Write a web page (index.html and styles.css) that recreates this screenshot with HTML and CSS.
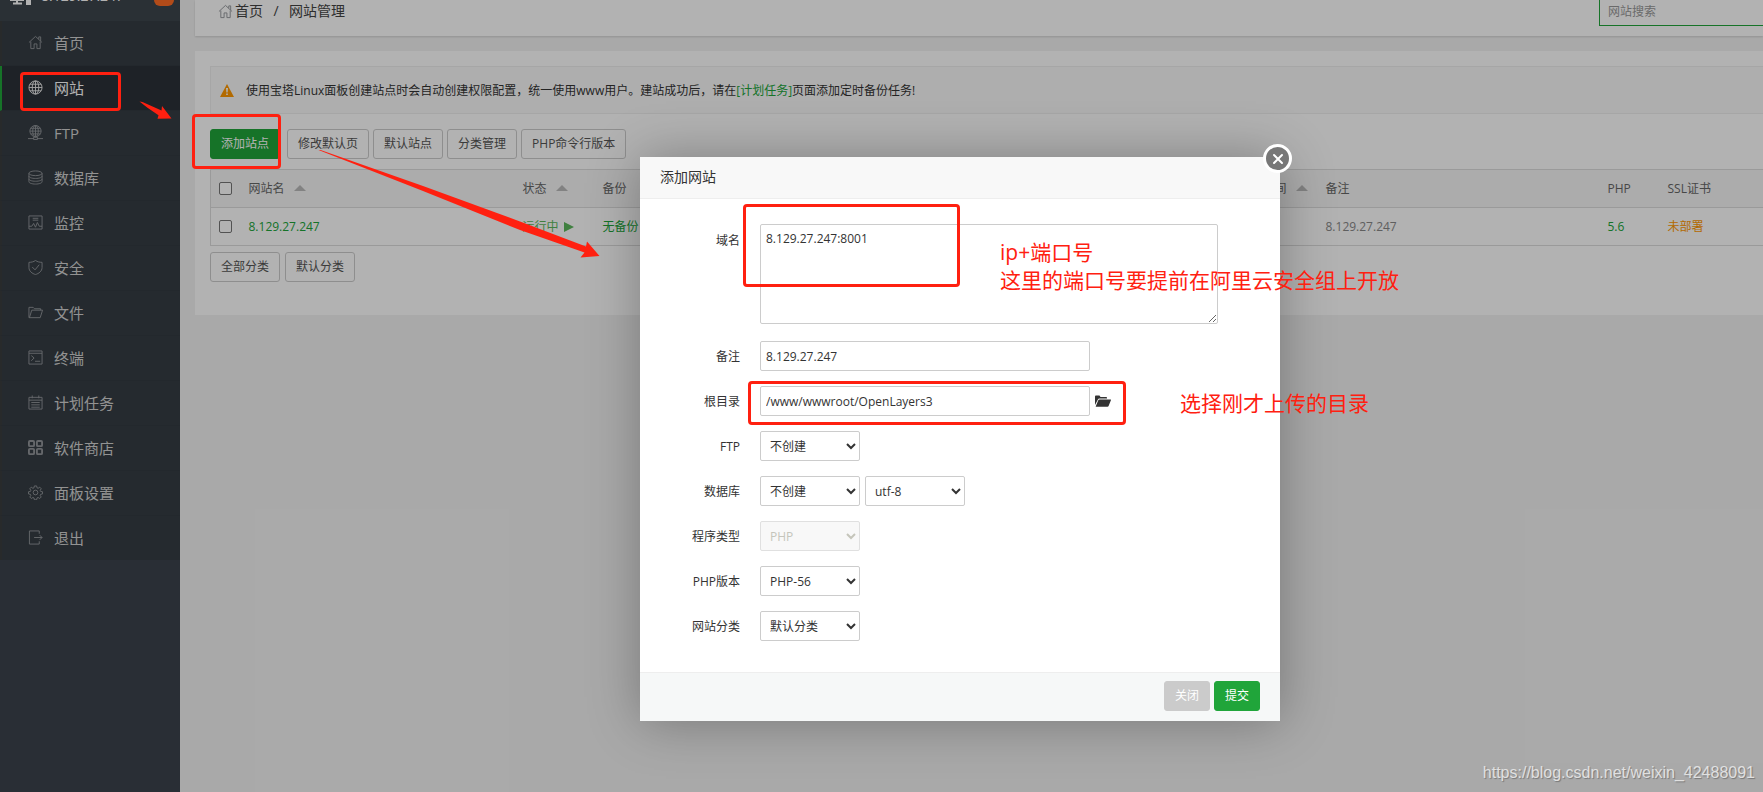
FILE: index.html
```html
<!DOCTYPE html>
<html lang="zh-CN">
<head>
<meta charset="utf-8">
<title>网站管理</title>
<link rel="stylesheet" href="styles.css">
</head>
<body>
<div class="app">
  <aside class="sidebar">
    <div class="brand">
      <div class="brand-row">
        <svg class="brand-icon" width="22" height="22" viewBox="0 0 22 22" fill="none" stroke="currentColor" stroke-width="2"><path d="M1 3h12v12H1zM7 15v3M3 18.500h9"/><path d="M16 7h5v13h-5z" fill="currentColor" stroke="none"/></svg>
        <span class="brand-name">8.129.27.247</span>
        <span class="badge">0</span>
      </div>
    </div>
    <nav class="menu">
      <a class="menu-item" href="#"><svg class="icon" viewBox="0 0 16 16"><path d="M1 8l7-6.500L15 8M11.500 4.500V2h2v4.500M3 7v7.500h3.500V9.500h3v5H13V7"/></svg>首页</a>
      <a class="menu-item active" href="#"><svg class="icon" viewBox="0 0 16 16"><circle cx="8" cy="8" r="7"/><ellipse cx="8" cy="8" rx="3.500" ry="7"/><path d="M8 1v14M1 8h14M2 4.500h12M2 11.500h12"/></svg>网站</a>
      <a class="menu-item" href="#"><svg class="icon" viewBox="0 0 16 16"><circle cx="8" cy="6.500" r="6"/><ellipse cx="8" cy="6.500" rx="3" ry="6"/><path d="M8 .5v12M2 6.500h12M3 3.500h10M3 9.500h10M0 14.500h6M10 14.500h6M6 13h4v2.500H6z"/></svg>FTP</a>
      <a class="menu-item" href="#"><svg class="icon" viewBox="0 0 16 16"><ellipse cx="8" cy="3.500" rx="7" ry="2.500"/><path d="M1 3.500v9c0 1.400 3 2.500 7 2.500s7-1.100 7-2.500v-9M1 6.500C1 8 4 9 8 9s7-1 7-2.500M1 9.500C1 11 4 12 8 12s7-1 7-2.500"/></svg>数据库</a>
      <a class="menu-item" href="#"><svg class="icon" viewBox="0 0 16 16"><path d="M1 1h14v14H1zM5 3.500h6M5 5.500h6M1 12h3l2-3 2 4 2-5 2 4h3"/></svg>监控</a>
      <a class="menu-item" href="#"><svg class="icon" viewBox="0 0 16 16"><path d="M8 .5C6 2 3.500 2.500 1 2.500V8c0 4 3.500 6.500 7 7.500 3.500-1 7-3.500 7-7.500V2.500C12.500 2.500 10 2 8 .5zM4.500 7.500l3 3 4.500-5.500"/></svg>安全</a>
      <a class="menu-item" href="#"><svg class="icon" viewBox="0 0 16 16"><path d="M1 13.500V2.500h4.500L7 4h6.500v1.500M1 13.500h12L15.500 5.500H4L1.500 13.500"/></svg>文件</a>
      <a class="menu-item" href="#"><svg class="icon" viewBox="0 0 16 16"><path d="M1 1h14v14H1zM1 3.500h14M3.500 6l3 2.500-3 3M7.500 12H13"/></svg>终端</a>
      <a class="menu-item" href="#"><svg class="icon" viewBox="0 0 16 16"><path d="M1 2.500h14V15H1zM1 5.500h14M4.500 .5v3M11.500 .5v3M3.500 8h9M3.500 10.500h9M3.500 13h9"/></svg>计划任务</a>
      <a class="menu-item" href="#"><svg class="icon bold" viewBox="0 0 16 16"><rect x="1" y="1" width="5.500" height="5.500" rx="1"/><rect x="9.500" y="1" width="5.500" height="5.500" rx="1"/><rect x="1" y="9.500" width="5.500" height="5.500" rx="1"/><rect x="9.500" y="9.500" width="5.500" height="5.500" rx="1"/></svg>软件商店</a>
      <a class="menu-item" href="#"><svg class="icon" viewBox="0 0 16 16"><circle cx="8" cy="8" r="2.500"/><path d="M6.800 1h2.400l.4 2 1.200.5 1.700-1.200 1.600 1.700-1.100 1.700.5 1.200 2 .3v2.300l-2 .4-.5 1.200 1.100 1.700-1.600 1.600-1.700-1.100-1.200.5-.4 2H6.800l-.4-2-1.200-.5-1.700 1.100-1.600-1.600L3 11.100l-.5-1.200-2-.4V7.200l2-.3L3 5.700 1.900 4l1.600-1.700 1.700 1.200L6.400 3z"/></svg>面板设置</a>
      <a class="menu-item" href="#"><svg class="icon" viewBox="0 0 16 16"><path d="M12 4V1H1.500v14H12v-3M6.500 8H15M12.500 5.500L15 8l-2.500 2.500"/></svg>退出</a>
    </nav>
  </aside>

  <main class="main">
    <div class="topbar">
      <div class="topbar-row">
        <div class="crumbs">
          <svg class="icon crumb-icon" viewBox="0 0 16 16"><path d="M1 8l7-6.500L15 8M11.500 4.500V2h2v4.500M3 7v7.500h3.500V9.500h3v5H13V7"/></svg>
          <a href="#">首页</a><span class="slash">/</span><span>网站管理</span>
        </div>
        <input class="search" type="text" placeholder="网站搜索" aria-label="网站搜索">
      </div>
    </div>

    <section class="card">
      <div class="alert">
        <svg width="14" height="13" viewBox="0 0 14 13"><path d="M7 0l7 13H0z" fill="#ff9900"/><path d="M6 4h2l-.4 4.500H6.400zM6.200 9.500h1.600V11H6.200z" fill="#fff"/></svg>
        <p>使用宝塔Linux面板创建站点时会自动创建权限配置，统一使用www用户。建站成功后，请在<a href="#">[计划任务]</a>页面添加定时备份任务!</p>
      </div>
      <div class="toolbar">
        <button class="btn primary" type="button">添加站点</button>
        <button class="btn" type="button">修改默认页</button>
        <button class="btn" type="button">默认站点</button>
        <button class="btn" type="button">分类管理</button>
        <button class="btn" type="button">PHP命令行版本</button>
      </div>
      <table class="sites">
        <colgroup><col class="c-check"><col class="c-name"><col class="c-status"><col class="c-backup"><col class="c-expire"><col class="c-note"><col class="c-php"><col class="c-ssl"></colgroup>
        <thead>
          <tr><th><input type="checkbox" aria-label="全选"></th><th>网站名<i class="sort"></i></th><th>状态<i class="sort"></i></th><th>备份</th><th>到期时间<i class="sort"></i></th><th>备注</th><th>PHP</th><th>SSL证书</th></tr>
        </thead>
        <tbody>
          <tr><td><input type="checkbox" aria-label="8.129.27.247"></td><td><a href="#">8.129.27.247</a></td><td><a class="running" href="#">运行中<i class="play"></i></a></td><td><a href="#">无备份</a></td><td></td><td class="note">8.129.27.247</td><td><a href="#">5.6</a></td><td><a class="warn" href="#">未部署</a></td></tr>
        </tbody>
      </table>
      <div class="filters">
        <button class="btn" type="button">全部分类</button>
        <button class="btn" type="button">默认分类</button>
      </div>
    </section>
  </main>
</div>

<div class="shade"></div>

<div class="dialog" role="dialog" aria-labelledby="dialog-title">
  <h2 class="dialog-title" id="dialog-title">添加网站</h2>
  <button class="close" type="button" aria-label="关闭窗口"><svg width="12" height="12" viewBox="0 0 12 12"><path d="M2 2l8 8M10 2l-8 8" stroke="#fff" stroke-width="2" stroke-linecap="round"/></svg></button>
  <form class="form">
    <div class="row top"><label for="domain">域名</label><textarea id="domain" class="field">8.129.27.247:8001</textarea></div>
    <div class="row"><label for="note">备注</label><input id="note" class="field" type="text" value="8.129.27.247"></div>
    <div class="row"><label for="root">根目录</label><input id="root" class="field" type="text" value="/www/wwwroot/OpenLayers3">
      <svg class="folder" width="16" height="12" viewBox="0 0 16 12"><path d="M0 10V1.500C0 1 .5.500 1 .5h3.500l1 1.500H11c.6 0 1 .4 1 1v.5H4.500c-.8 0-1.300.3-1.600 1z" fill="#333"/><path d="M4.500 4.500h11c.4 0 .6.300.4.700l-2.300 5.800c-.2.600-.6.800-1.100.8H1.200c-.4 0-.5-.3-.4-.6l2.500-6c.2-.5.600-.7 1.200-.7z" fill="#333"/></svg>
    </div>
    <div class="row"><label for="ftp">FTP</label><select id="ftp"><option>不创建</option></select></div>
    <div class="row"><label for="db">数据库</label><select id="db"><option>不创建</option></select><select aria-label="编码"><option>utf-8</option></select></div>
    <div class="row"><label for="type">程序类型</label><select id="type" disabled><option>PHP</option></select></div>
    <div class="row"><label for="php">PHP版本</label><select id="php"><option>PHP-56</option></select></div>
    <div class="row"><label for="cat">网站分类</label><select id="cat"><option>默认分类</option></select></div>
  </form>
  <div class="dialog-foot">
    <button class="btn muted" type="button">关闭</button>
    <button class="btn primary" type="button">提交</button>
  </div>
</div>

<div class="marks">
  <div class="box box-menu"></div>
  <div class="box box-add"></div>
  <div class="box box-domain"></div>
  <div class="box box-root"></div>
  <svg class="arrows" width="620" height="270" viewBox="0 0 620 270" fill="#ff2010">
    <path d="M139.500 101.500l3 .5 19 8.500.5-4.500 9.500 12.500-14 .3 1-3.500-11-7.500z"/>
    <path d="M318.500 150l2 0L423 186L520 221.500L586 246.500l1-5L599.500 256l-19 1.500 4-5L520 230L423 191z"/>
  </svg>
  <p class="remark remark-port">ip+端口号<br>这里的端口号要提前在阿里云安全组上开放</p>
  <p class="remark remark-dir">选择刚才上传的目录</p>
</div>
<div class="watermark">https://blog.csdn.net/weixin_42488091</div>
</body>
</html>
```
FILE: styles.css
```css
* { box-sizing: border-box; }
html, body { height: 100%; }
body {
  margin: 0;
  overflow: hidden;
  position: relative;
  font: 12px/20px "Open Sans", "Noto Sans CJK SC", sans-serif;
  color: #555;
  background: #f3f3f3;
}
a { color: #20a53a; text-decoration: none; }
p, h2 { margin: 0; font-weight: normal; }
button, input, select, textarea { font: inherit; color: inherit; margin: 0; }

.app { display: flex; min-height: 100%; }

/* Sidebar */
.sidebar { flex: none; width: 180px; background: #3c434d; }
.brand {
  display: flex;
  flex-direction: column;
  justify-content: flex-end;
  height: 21px;
  overflow: hidden;
  background: #3d454d;
}
.brand-row {
  flex: none;
  display: flex;
  align-items: center;
  height: 50px;
  padding: 0 6px 0 10px;
  color: #fff;
  font-size: 14px;
}
.brand-icon { margin-right: 9px; }
.brand-name { flex: 1; }
.badge {
  width: 20px;
  height: 20px;
  border-radius: 6px;
  background: #ff6c24;
  font-size: 12px;
  text-align: center;
}
.menu { background: #353d44; }
.menu-item {
  display: flex;
  align-items: center;
  height: 45px;
  padding: 0 0 1px 26px;
  border-left: 2px solid #3a3d3e;
  border-bottom: 1px solid #333a41;
  color: #d2d2d2;
  font-size: 15px;
}
.menu-item:last-child { height: 44px; border-bottom: 0; }
.menu-item.active { background: #2b3138; border-left-color: #20a53a; color: #fff; }
.icon {
  flex: none;
  width: 15px;
  height: 15px;
  margin-right: 11px;
  fill: none;
  stroke: #92959a;
  stroke-width: 1;
}
.icon.bold { stroke-width: 2; }
.active .icon { stroke: #e8e8e8; }

/* Page head */
.main { flex: 1; min-width: 0; padding-left: 15px; }
.topbar {
  display: flex;
  flex-direction: column;
  justify-content: flex-end;
  height: 36px;
  overflow: hidden;
  margin-bottom: 15px;
  background: #fff;
  box-shadow: 0 1px 2px rgba(0, 0, 0, .15);
}
.topbar-row {
  flex: none;
  display: flex;
  align-items: center;
  justify-content: space-between;
  height: 50px;
  padding-left: 23px;
}
.crumbs { display: flex; align-items: center; font-size: 14px; color: #444; }
.crumbs a { color: #444; }
.crumb-icon { margin-right: 2px; }
.slash { width: 26px; text-align: center; }
.search {
  width: 164px;
  height: 30px;
  padding: 0 8px;
  border: 1px solid #20a53a;
  border-right: 0;
  background: #fff;
}
.search::placeholder { color: #999; }

/* Content card */
.card { padding: 15px 0 33px 15px; background: #fff; }
.alert {
  display: flex;
  align-items: center;
  gap: 12px;
  height: 48px;
  padding-top: 1px;
  padding-left: 9px;
  border: 1px solid #eee;
  border-right: 0;
  background: #fafafa;
  color: #333;
}
.toolbar { display: flex; gap: 4px; margin: 15px 0 10px; }
.toolbar .primary { margin-right: 3px; }
.btn {
  height: 30px;
  padding: 0 10px;
  border: 1px solid #ccc;
  border-radius: 3px;
  background: #fff;
  white-space: nowrap;
}
.btn.primary { background: #20a53a; border-color: #20a53a; color: #fff; }
.btn.muted { background: #cbcbcb; border-color: #cbcbcb; color: #fff; }
.sites {
  width: 100%;
  table-layout: fixed;
  border-collapse: collapse;
  border: 1px solid #ddd;
  border-right: 0;
}
.sites th, .sites td {
  height: 38px;
  padding: 0 8px;
  border-bottom: 1px solid #ddd;
  text-align: left;
  font-weight: normal;
  white-space: nowrap;
}
.sites th { background: #f6f6f6; color: #666; }
.sites input {
  appearance: none;
  display: block;
  width: 13px;
  height: 13px;
  border: 1px solid #767676;
  border-radius: 2px;
  background: #fff;
}
.c-check { width: 30px; }
.c-name { width: 274px; }
.c-status { width: 80px; }
.c-backup { width: 636px; }
.c-expire { width: 87px; }
.c-note { width: 282px; }
.c-php { width: 60px; }
.sort, .play { display: inline-block; border: solid transparent; }
.sort { margin-left: 9px; vertical-align: 2px; border-width: 0 6px 6px; border-bottom-color: #bbb; }
.play { margin-left: 5px; vertical-align: -1px; border-width: 5px 0 5px 10px; border-left-color: #5cb85c; }
.running { color: #5cb85c; }
.warn { color: #ff9900; }
.note { color: #888; }
.filters { display: flex; gap: 5px; margin-top: 6px; }

/* Dialog */
.shade { position: absolute; inset: 0; background: rgba(0, 0, 0, .3); }
.dialog {
  position: absolute;
  left: 640px;
  top: 157px;
  width: 640px;
  background: #fff;
  color: #333;
  box-shadow: 1px 1px 50px rgba(0, 0, 0, .3);
}
.dialog-title {
  height: 42px;
  padding-left: 20px;
  border-bottom: 1px solid #eee;
  background: #f8f8f8;
  font-size: 14px;
  line-height: 40px;
}
.close {
  position: absolute;
  right: -12px;
  top: -13px;
  display: flex;
  align-items: center;
  justify-content: center;
  width: 29px;
  height: 29px;
  padding: 0;
  border: 3px solid #fff;
  border-radius: 50%;
  background: #777;
}
.form { display: flex; flex-direction: column; gap: 15px; padding: 25px 0 31px; }
.row { display: flex; align-items: center; gap: 5px; height: 30px; }
.row.top { align-items: flex-start; height: 102px; }
.row label { width: 100px; margin-right: 15px; padding-top: 2px; text-align: right; }
.row.top label { padding-top: 7px; }
.field, .row select {
  height: 30px;
  border: 1px solid #ccc;
  border-radius: 2px;
  background: #fff;
}
.field { width: 330px; padding: 0 5px; }
textarea.field { width: 458px; height: 100px; padding-top: 4px; resize: both; }
.row select { width: 100px; padding: 0 5px; }
.row select:disabled { background: #f8f8f8; border-color: #e0e0e0; color: #c5c5bb; opacity: 1; }
.dialog-foot {
  display: flex;
  justify-content: flex-end;
  gap: 4px;
  padding: 8px 20px 10px;
  border-top: 1px solid #eee;
  background: #f6f8f8;
}

/* Annotations drawn over the page */
.marks { position: absolute; inset: 0; pointer-events: none; }
.box { position: absolute; border: 3px solid #ff2010; border-radius: 4px; }
.box-menu { left: 20px; top: 72px; width: 101px; height: 39px; }
.box-add { left: 192px; top: 114px; width: 89px; height: 55px; }
.box-domain { left: 743px; top: 204px; width: 217px; height: 83px; }
.box-root { left: 748px; top: 381px; width: 378px; height: 44px; }
.arrows { position: absolute; left: 0; top: 0; }
.remark { position: absolute; color: #ff2010; font-size: 21px; line-height: 28px; white-space: nowrap; }
.remark-port { left: 1000px; top: 238px; }
.remark-dir { left: 1180px; top: 389px; }
.watermark {
  position: absolute;
  right: 8px;
  bottom: 9px;
  color: #e0e0e0;
  font: 16px/20px "Liberation Sans", Arial, sans-serif;
  text-shadow: 1px 1px 1px rgba(0, 0, 0, .3);
}
```
